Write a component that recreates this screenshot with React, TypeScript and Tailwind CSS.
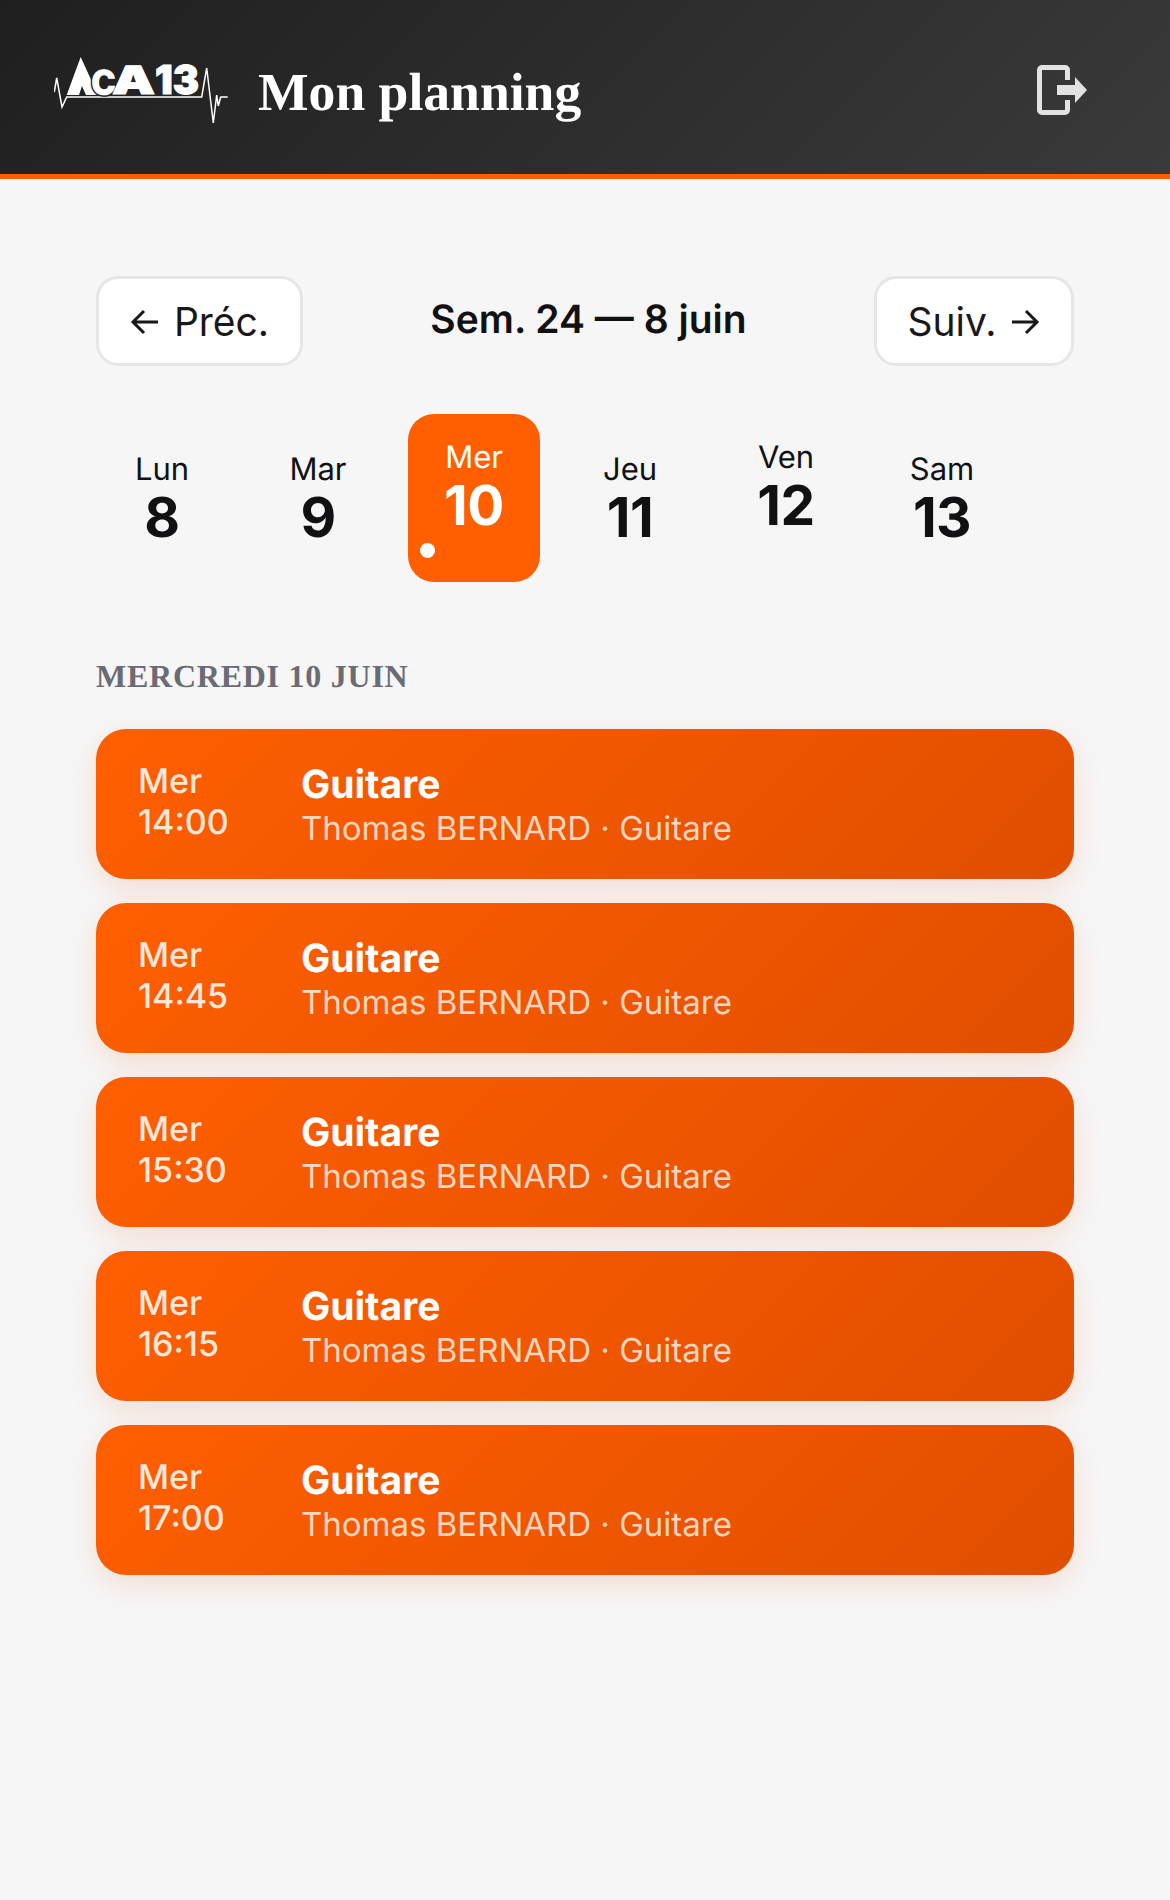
import React from "react";

const inter = { fontFamily: "Inter, sans-serif" };

function Logo() {
  return (
    <svg width="176" height="80" viewBox="0 0 176 80" className="shrink-0 mt-[6px]" aria-label="ACA13">
      <polyline points="0.3,42 2.7,28 8,57 12.7,47 147.7,47 152.7,18 159.3,73 162.7,45 164.3,56 166.7,47 173.7,47" fill="none" stroke="#fff" strokeWidth="1.5" />
      <polygon points="12.7,45 26.7,7 44,45 32,45 28,36 25,45" fill="#fff" />
      <text x="37" y="45" fontFamily="Inter, sans-serif" fontWeight="900" fontSize="35" fill="#fff" stroke="#242424" strokeWidth="3" paintOrder="stroke" textLength="25" lengthAdjust="spacingAndGlyphs">C</text>
      <text x="58" y="44" fontFamily="Inter, sans-serif" fontWeight="900" fontSize="39" fill="#fff" stroke="#fff" strokeWidth="1" textLength="43" lengthAdjust="spacingAndGlyphs">A</text>
      <text x="101" y="44" fontFamily="Inter, sans-serif" fontWeight="900" fontSize="40" fill="#fff" stroke="#fff" strokeWidth="1" textLength="44" lengthAdjust="spacingAndGlyphs">13</text>
    </svg>
  );
}

function Day({ label, num, selected, spacer }: { label: string; num: string; selected?: boolean; spacer?: boolean }) {
  return (
    <div className={selected ? "w-[132px] h-[168px] flex flex-col items-center justify-center rounded-[26px] bg-[#ff5f00] text-white" : "w-[132px] h-[168px] flex flex-col items-center justify-center rounded-[26px] text-[#111113]"}>
      <span className="text-[31px] leading-[38px] mt-[2px]">{label}</span>
      <span className="text-[55px] leading-[58px] font-bold tracking-[-0.5px]">{num}</span>
      {(selected || spacer) && (
        <span className={selected ? "self-start ml-3 mt-[8px] mb-[2px] w-[15px] h-[15px] rounded-full bg-white" : "self-start ml-3 mt-[8px] mb-[2px] w-[15px] h-[15px]"} />
      )}
    </div>
  );
}

function Card({ time }: { time: string }) {
  return (
    <div className="h-[150px] rounded-[30px] bg-[linear-gradient(135deg,#ff5f00,#e04e00)] flex items-center pl-[42px] pt-[2px] shadow-[0_10px_30px_rgba(224,78,0,0.14)]">
      <div className="w-[163px] text-[34px] leading-[42px] font-medium text-white/85 mt-[-6px]">
        <div>Mer</div>
        <div className="-mt-[1px]">{time}</div>
      </div>
      <div>
        <div className="text-[39px] leading-[46px] font-bold text-white">Guitare</div>
        <div className="-mt-[1px] text-[33px] leading-[42px] text-white/75">Thomas BERNARD · Guitare</div>
      </div>
    </div>
  );
}

export default function App() {
  return (
    <div className="min-h-[1900px] bg-[#f6f6f6] [text-rendering:geometricPrecision]" style={inter}>
      <header className="h-[179px] border-b-[5px] border-[#ff5f00] bg-[linear-gradient(135deg,#1f1f1f,#3a3a3a)] flex items-center pl-[54px] pr-[83px]">
        <Logo />
        <h1 className="ml-[28px] mt-[12px] text-[53.6px] leading-none text-white font-bold" style={{ fontFamily: '"Liberation Serif", serif' }}>Mon planning</h1>
        <svg width="50" height="50" viewBox="0 0 50 50" className="ml-auto mt-[6px]" fill="#e2e2e2">
          <path d="M5 0h23a5 5 0 0 1 5 5v10h-5V5H5v40h23V35h5v10a5 5 0 0 1-5 5H5a5 5 0 0 1-5-5V5a5 5 0 0 1 5-5z" />
          <path d="M20 20h18V12l12 13-12 13v-8H20z" />
        </svg>
      </header>
      <main className="px-[96px] pt-[97px]">
        <div className="flex items-start justify-between">
          <button className="h-[90px] w-[207px] flex items-center justify-center gap-[14px] pt-[2px] rounded-[22px] border-[3px] border-[#e6e6e8] bg-white text-[39px] text-[#18181b]">
            <svg width="30" height="30" viewBox="0 0 30 30" fill="none" stroke="#18181b" strokeWidth="3"><path d="M28 15H3M14 4 3 15l11 11" /></svg>
            Préc.
          </button>
          <div className="text-[39px] leading-[88px] font-semibold text-[#111113]">Sem. 24 — 8 juin</div>
          <button className="h-[90px] w-[200px] flex items-center justify-center gap-[14px] pt-[2px] rounded-[22px] border-[3px] border-[#e6e6e8] bg-white text-[39px] text-[#18181b]">
            Suiv.
            <svg width="30" height="30" viewBox="0 0 30 30" fill="none" stroke="#18181b" strokeWidth="3"><path d="M2 15h25M16 4l11 11-11 11" /></svg>
          </button>
        </div>
        <div className="flex gap-6 mt-[48px]">
          <Day label="Lun" num="8" />
          <Day label="Mar" num="9" />
          <Day label="Mer" num="10" selected />
          <Day label="Jeu" num="11" />
          <Day label="Ven" num="12" spacer />
          <Day label="Sam" num="13" />
        </div>
        <h2 className="mt-[74px] text-[32px] leading-[40px] font-bold tracking-[0.75px] text-[#6b6b75]" style={{ fontFamily: '"Liberation Serif", serif' }}>MERCREDI 10 JUIN</h2>
        <div className="mt-[33px] flex flex-col gap-6">
          <Card time="14:00" />
          <Card time="14:45" />
          <Card time="15:30" />
          <Card time="16:15" />
          <Card time="17:00" />
        </div>
      </main>
    </div>
  );
}
